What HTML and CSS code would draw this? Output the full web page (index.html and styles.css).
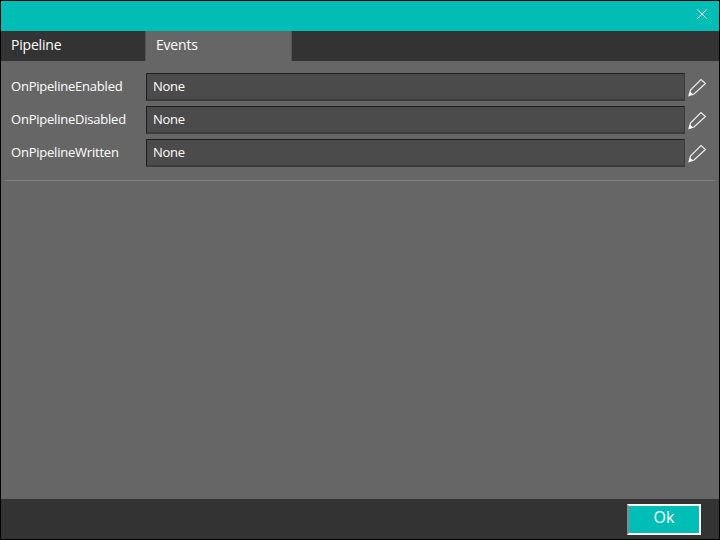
FILE: index.html
```html
<!DOCTYPE html>
<html lang="en">
<head>
<meta charset="utf-8">
<title>Pipeline</title>
<link rel="stylesheet" href="styles.css">
</head>
<body>
<div class="window">
  <header class="titlebar">
    <button class="close" aria-label="Close">
      <svg width="12" height="12" viewBox="0 0 12 12"><path d="M1 1l10 10M11 1L1 11" stroke="#fff" fill="none"/></svg>
    </button>
  </header>
  <nav class="tabs">
    <div class="tab">Pipeline</div>
    <div class="tab active">Events</div>
  </nav>
  <main class="content">
    <div class="rows">
      <div class="row">
        <label class="name">OnPipelineEnabled</label>
        <div class="field">None</div>
        <svg class="edit" width="20" height="20" viewBox="0 0 20 20"><path d="M2 18.500L3.500 13 14 2.500l4.500 4L7 17z" fill="none" stroke="#eee" stroke-width="1.200"/><path d="M2 18.500l1-4 3 3z" fill="#fff"/></svg>
      </div>
      <div class="row">
        <label class="name">OnPipelineDisabled</label>
        <div class="field">None</div>
        <svg class="edit" width="20" height="20" viewBox="0 0 20 20"><path d="M2 18.500L3.500 13 14 2.500l4.500 4L7 17z" fill="none" stroke="#eee" stroke-width="1.200"/><path d="M2 18.500l1-4 3 3z" fill="#fff"/></svg>
      </div>
      <div class="row">
        <label class="name">OnPipelineWritten</label>
        <div class="field">None</div>
        <svg class="edit" width="20" height="20" viewBox="0 0 20 20"><path d="M2 18.500L3.500 13 14 2.500l4.500 4L7 17z" fill="none" stroke="#eee" stroke-width="1.200"/><path d="M2 18.500l1-4 3 3z" fill="#fff"/></svg>
      </div>
    </div>
    <div class="divider"></div>
  </main>
  <footer class="footer">
    <button class="ok">Ok</button>
  </footer>
</div>
</body>
</html>
```
FILE: styles.css
```css
* { box-sizing: border-box; }
html, body { margin: 0; padding: 0; }
body { width: 720px; height: 540px; overflow: hidden; font-family: "Open Sans", "Noto Sans", sans-serif; color: #fff; }
.window { width: 720px; height: 540px; border: 1px solid #000; display: flex; flex-direction: column; background: #666; }
.titlebar { height: 30px; background: #00bdb5; display: flex; justify-content: flex-end; align-items: flex-start; padding: 7px 11px 0 0; flex: none; }
.close { width: 12px; height: 12px; padding: 0; border: 0; background: none; display: block; }
.close svg { display: block; }
.tabs { height: 30px; background: #333; display: flex; flex: none; }
.tab { width: 144px; padding: 4px 0 0 10px; font-size: 14px; line-height: 20px; font-weight: 500; letter-spacing: -0.2px; }
.tab.active { width: 147px; background: #666; border-left: 1px solid #555; border-right: 1px solid #555; }
.content { flex: 1; padding: 12px 4px 0 4px; }
.rows { display: flex; flex-direction: column; gap: 5px; padding-bottom: 13px; }
.row { display: flex; align-items: center; height: 28px; }
.name { width: 141px; padding: 0 0 2px 6px; font-size: 13px; font-weight: 500; letter-spacing: -0.22px; white-space: nowrap; }
.field { width: 539px; height: 28px; background: #4b4b4b; border: 1px solid #1e1e1e; border-bottom: 2px solid #3c3c3c; border-right-color: #3c3c3c; padding-left: 6px; font-size: 13px; font-weight: 500; line-height: 25px; letter-spacing: -0.25px; }
.edit { margin-left: 2px; flex: none; }
.divider { height: 1px; background: #75828d; }
.footer { height: 40px; background: #333; flex: none; display: flex; justify-content: flex-end; align-items: center; padding-right: 18px; }
.ok { width: 74px; height: 31px; background: #00bdb5; border: 2px solid #fff; border-left-color: #888; color: #fff; font: 500 16px/18px "Open Sans", "Noto Sans", sans-serif; padding: 0 0 5px; }
```
